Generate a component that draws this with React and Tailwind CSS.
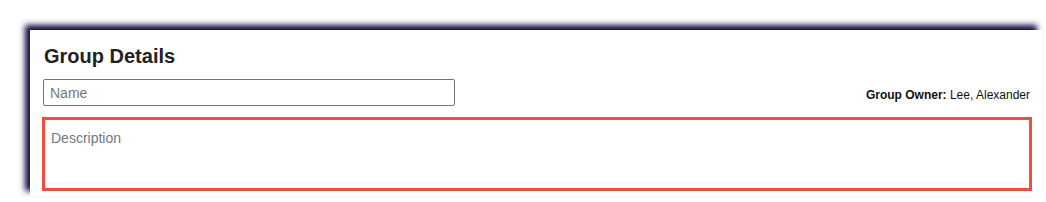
import React from "react";

export default function App() {
  return (
    <div className="w-[1046px] h-[202px] bg-white overflow-hidden" style={{ fontFamily: '"Liberation Sans", Arial, sans-serif' }}>
      <div className="ml-[30px] mt-[30px] w-[1012px] h-[166px] bg-white shadow-[-5px_-5px_6px_#130b3c] pl-[13px] pr-[11px] pt-[14px]">
        <h2 className="text-[20px] leading-6 font-bold text-[#222] pl-[1px]">Group Details</h2>
        <div className="mt-[11px] flex items-center justify-between">
          <input
            type="text"
            placeholder="Name"
            className="w-[412px] h-[27px] border border-[#767676] rounded-[2px] px-[6px] text-[14px] text-[#222] placeholder:text-[#777] outline-none"
            style={{ fontFamily: '"Liberation Sans", Arial, sans-serif' }}
          />
          <div className="text-[12px] text-[#111] mt-[5px] mr-[1px]">
            <span className="font-bold">Group Owner:</span> Lee, Alexander
          </div>
        </div>
        <textarea
          placeholder="Description"
          className="mt-[11px] -ml-[1px] block w-[990px] h-[74px] border-[3px] border-[#f44b3c] px-[6px] pt-[8px] text-[14px] placeholder:text-[#717782] resize-none outline-none"
          style={{ fontFamily: '"Liberation Sans", Arial, sans-serif' }}
        />
      </div>
    </div>
  );
}
